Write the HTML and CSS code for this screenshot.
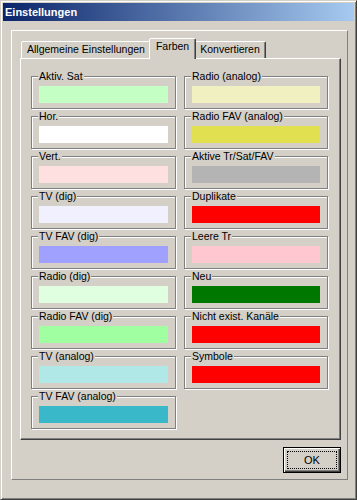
FILE: index.html
```html
<!DOCTYPE html>
<html lang="de">
<head>
  <meta charset="UTF-8">
  <meta name="viewport" content="width=device-width, initial-scale=1.0">
  <title>Einstellungen</title>
  <link rel="stylesheet" href="styles.css">
</head>
<body>
  <div class="window">
    <div class="titlebar">Einstellungen</div>
    <div class="frame">
      <div class="tabs">
        <div class="tab">Allgemeine Einstellungen</div>
        <div class="tab active">Farben</div>
        <div class="tab">Konvertieren</div>
      </div>
      <div class="panel">
        <div class="column">
          <div class="group"><span class="group-label">Aktiv. Sat</span><div class="swatch c-aktiv"></div></div>
          <div class="group"><span class="group-label">Hor.</span><div class="swatch c-hor"></div></div>
          <div class="group"><span class="group-label">Vert.</span><div class="swatch c-vert"></div></div>
          <div class="group"><span class="group-label">TV (dig)</span><div class="swatch c-tv"></div></div>
          <div class="group"><span class="group-label">TV FAV (dig)</span><div class="swatch c-tvfav"></div></div>
          <div class="group"><span class="group-label">Radio (dig)</span><div class="swatch c-radio"></div></div>
          <div class="group"><span class="group-label">Radio FAV (dig)</span><div class="swatch c-radiofav"></div></div>
          <div class="group"><span class="group-label">TV (analog)</span><div class="swatch c-tva"></div></div>
          <div class="group"><span class="group-label">TV FAV (analog)</span><div class="swatch c-tvfava"></div></div>
        </div>
        <div class="column">
          <div class="group"><span class="group-label">Radio (analog)</span><div class="swatch c-radioa"></div></div>
          <div class="group"><span class="group-label">Radio FAV (analog)</span><div class="swatch c-radiofava"></div></div>
          <div class="group"><span class="group-label">Aktive Tr/Sat/FAV</span><div class="swatch c-aktive"></div></div>
          <div class="group"><span class="group-label">Duplikate</span><div class="swatch c-red"></div></div>
          <div class="group"><span class="group-label">Leere Tr</span><div class="swatch c-leere"></div></div>
          <div class="group"><span class="group-label">Neu</span><div class="swatch c-neu"></div></div>
          <div class="group"><span class="group-label">Nicht exist. Kanäle</span><div class="swatch c-red"></div></div>
          <div class="group"><span class="group-label">Symbole</span><div class="swatch c-red"></div></div>
        </div>
      </div>
      <div class="footer">
        <button class="ok-button">OK</button>
      </div>
    </div>
  </div>
</body>
</html>
```

FILE: styles.css
```css
body {
  margin: 0;
  font-family: "Liberation Sans", Arial, sans-serif;
  font-size: 10.5px;
  color: #000;
}
.window {
  width: 357px;
  height: 500px;
  box-sizing: border-box;
  padding: 2px;
  background: #d4d0c8;
  border: 1px solid;
  border-color: #d4d0c8 #404040 #404040 #d4d0c8;
  box-shadow: inset 1px 1px #fff, inset -1px -1px #808080;
}
.titlebar {
  height: 18px;
  line-height: 18px;
  padding-left: 2px;
  color: #fff;
  font-size: 11px;
  font-weight: bold;
  background: linear-gradient(to right, #0a246a, #a6caf0);
}
.frame {
  width: 337px;
  height: 450px;
  box-sizing: border-box;
  margin: 9px 0 0 8px;
  border: 1px solid;
  border-color: #fff #808080 #808080 #fff;
}
.tabs {
  display: flex;
  align-items: flex-end;
  margin: 7px 0 0 9px;
}
.tab {
  height: 17px;
  box-sizing: border-box;
  padding: 0 5px;
  line-height: 15px;
  border: 1px solid;
  border-bottom: none;
  border-color: #fff #404040 transparent #fff;
  border-radius: 2px 2px 0 0;
  box-shadow: inset -1px 0 #808080;
  background: #d4d0c8;
  white-space: nowrap;
}
.tab.active {
  position: relative;
  z-index: 1;
  height: 21px;
  margin: 0 -2px -1px;
  padding: 0 6px;
}
.panel {
  display: flex;
  gap: 8px;
  width: 321px;
  height: 382px;
  box-sizing: border-box;
  margin-left: 8px;
  padding: 17px 0 0 10px;
  border: 1px solid;
  border-color: #fff #404040 #404040 #fff;
  box-shadow: inset -1px -1px #808080;
}
.column {
  display: flex;
  flex-direction: column;
  gap: 7px;
  width: 145px;
}
.column + .column {
  width: 144px;
}
.group {
  position: relative;
  height: 33px;
  box-sizing: border-box;
  padding: 9px 7px 0;
  border: 1px solid #808080;
  box-shadow: inset 1px 1px #fff, 1px 1px #fff;
}
.group-label {
  position: absolute;
  top: -7px;
  left: 6px;
  padding: 0 1px;
  line-height: 13px;
  background: #d4d0c8;
  white-space: nowrap;
}
.swatch {
  height: 17px;
}
.c-aktiv { background: #c4ffc4; }
.c-hor { background: #ffffff; }
.c-vert { background: #ffe0e0; }
.c-tv { background: #f0f0ff; }
.c-tvfav { background: #a0a0ff; }
.c-radio { background: #e0ffe0; }
.c-radiofav { background: #a0ffa0; }
.c-tva { background: #b0e8e8; }
.c-tvfava { background: #38b8c8; }
.c-radioa { background: #f0f0c0; }
.c-radiofava { background: #e0e050; }
.c-aktive { background: #b4b4b4; }
.c-red { background: #ff0000; }
.c-leere { background: #ffc8d0; }
.c-neu { background: #007800; }
.footer {
  display: flex;
  justify-content: flex-end;
  width: 321px;
  margin: 7px 0 0 8px;
}
.ok-button {
  width: 58px;
  height: 26px;
  padding: 0;
  font-family: inherit;
  font-size: 11px;
  background: #d4d0c8;
  border: 1px solid #000;
  box-shadow: inset 1px 1px #fff, inset -1px -1px #404040, inset -2px -2px #808080;
  outline: 1px dotted #000;
  outline-offset: -5px;
}
```
